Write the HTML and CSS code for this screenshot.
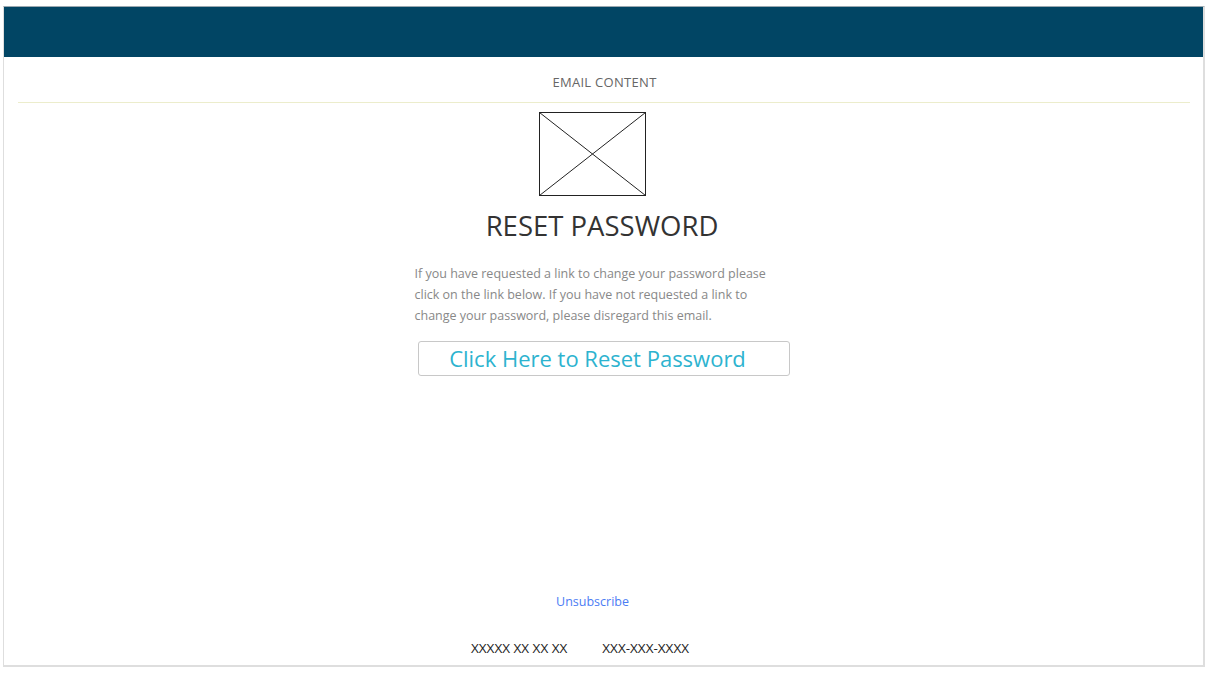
FILE: index.html
```html
<!DOCTYPE html>
<html>
<head>
<meta charset="utf-8">
<link rel="stylesheet" href="styles.css">
</head>
<body>
<div class="frame">
  <div class="topbar"></div>
  <div class="content">
    <div class="label">EMAIL CONTENT</div>
    <div class="rule"></div>
    <div class="placeholder">
      <svg width="107" height="84" viewBox="0 0 107 84">
        <rect x="0.5" y="0.5" width="106" height="83" fill="none" stroke="#222" stroke-width="1"/>
        <line x1="0.5" y1="0.5" x2="106.5" y2="83.5" stroke="#222" stroke-width="1"/>
        <line x1="106.5" y1="0.5" x2="0.5" y2="83.5" stroke="#222" stroke-width="1"/>
      </svg>
    </div>
    <h1 class="title">RESET PASSWORD</h1>
    <p class="message">If you have requested a link to change your password please click on the link below. If you have not requested a link to change your password, please disregard this email.</p>
    <a class="reset-btn" href="#">Click Here to Reset Password</a>
  </div>
  <div class="footer">
    <a class="unsub" href="#">Unsubscribe</a>
    <div class="contact">
      <span>XXXXX XX XX XX</span>
      <span>XXX-XXX-XXXX</span>
    </div>
  </div>
</div>
</body>
</html>
```
FILE: styles.css
```css
html, body {
  margin: 0;
  padding: 0;
  background: #fff;
}
body {
  font-family: "Open Sans", "Liberation Sans", sans-serif;
}
.frame {
  margin: 6px 0 0 3px;
  width: 1202px;
  height: 661px;
  box-sizing: border-box;
  border: 2px solid #dedede;
  border-left-width: 1px;
  border-top: 1px solid #9aa8b0;
  display: flex;
  flex-direction: column;
}
.topbar {
  height: 50px;
  background: #014564;
  flex: none;
}
.content {
  display: flex;
  flex-direction: column;
  align-items: center;
}
.label {
  margin-top: 16px;
  font-size: 13px;
  color: #666;
  letter-spacing: 0.3px;
  line-height: 18px;
  margin-left: 2px;
}
.rule {
  align-self: stretch;
  margin: 11px 13px 0 14px;
  height: 1px;
  background: #ecedcc;
}
.placeholder {
  margin-top: 9px;
  margin-left: -22px;
  height: 84px;
  display: flex;
}
.title {
  margin: 12px 0 0 0;
  font-size: 27.5px;
  font-weight: 400;
  color: #333;
  line-height: 36px;
  margin-left: -3px;
}
.message {
  margin: 19px 0 0 -18px;
  width: 360px;
  font-size: 12.5px;
  line-height: 21px;
  color: #888;
}
.reset-btn {
  margin-top: 15px;
  width: 372px;
  height: 35px;
  box-sizing: border-box;
  border: 1px solid #c8c8c8;
  border-radius: 3px;
  text-decoration: none;
  color: #2db3cf;
  font-size: 22px;
  line-height: 32px;
  text-align: center;
  padding-right: 12px;
}
.footer {
  margin-top: auto;
  display: flex;
  flex-direction: column;
  align-items: center;
  padding-bottom: 8px;
}
.unsub {
  color: #4b7cf4;
  text-decoration: none;
  font-size: 12.5px;
  line-height: 18px;
  margin-left: -22px;
}
.contact {
  margin-top: 28px;
  display: flex;
  gap: 35px;
  font-size: 13.5px;
  line-height: 18px;
  color: #222;
  margin-left: -47px;
}
```
